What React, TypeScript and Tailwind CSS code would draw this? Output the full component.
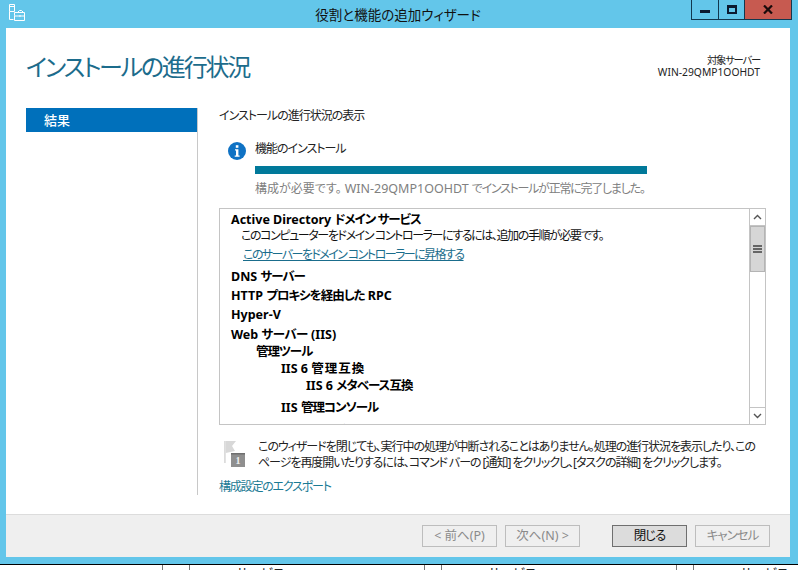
import React from "react";

const FONT = '"Noto Sans","Noto Sans CJK JP",sans-serif';

function K({ children }: { children: React.ReactNode }) {
  return <span className="tracking-[-1px]">{children}</span>;
}

function Row({ left, top, bold, children }: { left: number; top: number; bold?: boolean; children: React.ReactNode }) {
  return (
    <div
      className={`whitespace-nowrap leading-[16px] ${bold ? "font-bold text-[12.5px] text-black" : "text-[12px] text-[#111]"}`}
      style={{ paddingLeft: left, marginTop: top }}
    >
      {children}
    </div>
  );
}

function Btn({ label, primary, tight }: { label: string; primary?: boolean; tight?: boolean }) {
  return (
    <div
      className={`w-[75px] h-[22px] flex items-center justify-center text-[12.5px] border ${tight ? "tracking-[-1px]" : ""} ${
        primary ? "bg-[#dcdcdc] border-[#6f6f6f] text-[#111]" : "bg-[#efefef] border-[#bdbdbd] text-[#8a8a8a]"
      }`}
    >
      {label}
    </div>
  );
}

function ServerIcon() {
  return (
    <svg width="18" height="18" viewBox="0 0 18 18" fill="none" stroke="#fff" strokeWidth="1" className="absolute left-[8px] top-[4px]">
      <path d="M1.5 0.5h5v7h-5z" />
      <path d="M1.5 7.5v8" />
      <path d="M1.5 2.5h5" />
      <path d="M1.5 15.5h4" />
      <path d="M6.5 11.5v-3h10v3.5h-10z" fill="#63c6ea" />
      <path d="M6.5 12v4.5h10V12" />
      <path d="M9.5 8.5l2-2h2l2 2" />
      <path d="M11 12h2" />
    </svg>
  );
}

function InfoIcon() {
  return (
    <svg width="18" height="18" viewBox="0 0 18 18">
      <circle cx="9" cy="9" r="9" fill="#0f72c4" />
      <rect x="7.8" y="3.2" width="2.6" height="2.6" fill="#fff" />
      <path d="M7 7.3h3.4v6.2h1.2v1.3H6.7v-1.3h1.3V8.6H7z" fill="#fff" />
    </svg>
  );
}

function FlagIcon() {
  return (
    <svg width="22" height="26" viewBox="0 0 22 26">
      <path d="M1 0h1.8v22H1z" fill="#dcdcdc" />
      <path d="M2.8 0H13l-4 5 3 5-9.2 2z" fill="#d8d8d8" />
      <rect x="8" y="12" width="14" height="14" fill="#8f8f8f" />
      <rect x="8" y="12" width="14" height="1.5" fill="#6f6f6f" />
      <text x="15" y="23" textAnchor="middle" fontSize="10" fontWeight="700" fill="#eee" fontFamily='"Liberation Serif",serif'>1</text>
    </svg>
  );
}

function Scrollbar() {
  return (
    <div className="w-[17px] shrink-0 flex flex-col border-x border-[#c4c4c4] bg-white">
      <div className="h-[17px] flex items-center justify-center border-b border-[#c4c4c4]">
        <svg width="9" height="6" viewBox="0 0 9 6" fill="none" stroke="#555" strokeWidth="1.4"><path d="M1 5l3.5-3.5L8 5" /></svg>
      </div>
      <div className="h-[46px] bg-[#d6d6d6] border border-[#b4b4b4] flex flex-col items-center justify-center gap-[1px]">
        <div className="w-[9px] h-[2px] bg-[#666]" />
        <div className="w-[9px] h-[2px] bg-[#666]" />
        <div className="w-[9px] h-[2px] bg-[#666]" />
      </div>
      <div className="flex-1" />
      <div className="h-[17px] flex items-center justify-center border-t border-[#c4c4c4]">
        <svg width="9" height="6" viewBox="0 0 9 6" fill="none" stroke="#555" strokeWidth="1.4"><path d="M1 1l3.5 3.5L8 1" /></svg>
      </div>
    </div>
  );
}

export default function App() {
  return (
    <div className='w-[798px] h-[570px] overflow-hidden bg-white flex flex-col [font-feature-settings:"palt"]' style={{ fontFamily: FONT }}>
      <div className="h-[564px] shrink-0 bg-[#63c6ea] flex flex-col relative">
        {/* title bar */}
        <div className="h-[28px] shrink-0 flex items-center justify-center text-[13.5px] text-[#111] pt-[2px] pr-[2px]">
          役割と機能の追加ウィザード
        </div>
        <ServerIcon />
        <div className="absolute top-0 left-[691px] flex h-[20px] border-x border-b border-[#12384f]">
          <div className="w-[27px] flex items-center justify-center border-r border-[#12384f]">
            <div className="w-[10px] h-[3px] bg-[#0b1a30] mt-[3px]" />
          </div>
          <div className="w-[26px] flex items-center justify-center border-r border-[#12384f]">
            <div className="w-[10px] h-[9px] border-2 border-t-[3px] border-[#0b1a30]" />
          </div>
          <div className="w-[46px] bg-[#c75a50] flex items-center justify-center">
            <svg width="10" height="9" viewBox="0 0 10 9" stroke="#1a0a0a" strokeWidth="2.2"><path d="M1 0.5l8 8M9 0.5l-8 8" /></svg>
          </div>
        </div>

        {/* client */}
        <div className="flex-1 ml-[6px] mr-[8px] mb-[7px] bg-white flex flex-col min-h-0">
          <div className="h-[80px] shrink-0 pl-[20px] pr-[30px] flex justify-between">
            <div className="text-[24px] leading-[32px] pt-[23px] text-[#1c6c8c] tracking-[-2.2px]">インストールの進行状況</div>
            <div className="pt-[26px] text-right text-[10.3px] leading-[12px] text-[#222]">
              <div className="tracking-[-1.2px]">対象サーバー</div>
              <div>WIN-29QMP1OOHDT</div>
            </div>
          </div>

          <div className="flex-1 flex min-h-0 pl-[20px]">
            <div className="w-[172px] h-[387px] shrink-0 border-r border-[#c8c8c8]">
              <div className="w-[171px] h-[24px] bg-[#0070bb] text-white text-[13px] font-medium flex items-center pl-[18px] pt-[2px]">結果</div>
            </div>
            <div className="ml-[21px] w-[547px] flex flex-col">
              <div className="text-[12px] leading-[16px] text-[#222] tracking-[-1px]">インストールの進行状況の表示</div>
              <div className="flex mt-[17px] pl-[9px]">
                <div className="pt-[1px]"><InfoIcon /></div>
                <div className="ml-[9px]">
                  <div className="text-[12px] leading-[16px] text-[#222] tracking-[-1px]">機能のインストール</div>
                  <div className="w-[392px] h-[8px] mt-[9px] bg-[#00799a]" />
                  <div className="text-[12px] leading-[16px] mt-[7px] text-[#808080] whitespace-nowrap">
                    構成が必要です。 <span className="text-[12.5px]">WIN-29QMP1OOHDT</span> <span className="tracking-[-1.25px]">でインストールが正常に完了しました。</span>
                  </div>
                </div>
              </div>

              <div className="mt-[11px] h-[217px] flex border border-[#c4c4c4] border-r-0 overflow-hidden">
                <div className="flex-1 overflow-hidden pt-[3px]">
                  <Row left={11} top={0} bold>Active Directory <K>ドメイン サービス</K></Row>
                  <Row left={21} top={0}><span className="tracking-[-1.4px]">このコンピューターをドメイン コントローラーにするには、追加の手順が必要です。</span></Row>
                  <Row left={23} top={3}><span className="text-[#1a6d8c] underline tracking-[-1.55px]">このサーバーをドメイン コントローラーに昇格する</span></Row>
                  <Row left={11} top={6} bold>DNS <K>サーバー</K></Row>
                  <Row left={11} top={3} bold>HTTP <K>プロキシを経由した</K> RPC</Row>
                  <Row left={11} top={3} bold>Hyper-V</Row>
                  <Row left={11} top={4} bold>Web <span className="tracking-[-0.5px]">サーバー</span> (IIS)</Row>
                  <Row left={36} top={1} bold><K>管理ツール</K></Row>
                  <Row left={61} top={1} bold>IIS 6 <span className="tracking-[1px]">管理互換</span></Row>
                  <Row left={86} top={1} bold>IIS 6 <K>メタベース互換</K></Row>
                  <Row left={61} top={6} bold>IIS <K>管理コンソール</K></Row>
                  <Row left={61} top={7} bold>その他の機能</Row>
                </div>
                <Scrollbar />
              </div>

              <div className="flex mt-[14px] pl-[4px]">
                <div className="pt-[2px]"><FlagIcon /></div>
                <div className="ml-[13px] text-[12px] leading-[16px] text-[#222] whitespace-nowrap">
                  <div className="tracking-[-1.03px]">このウィザードを閉じても、実行中の処理が中断されることはありません。処理の進行状況を表示したり、この</div>
                  <div className="tracking-[-1.05px]">ページを再度開いたりするには、コマンド バーの [通知] をクリックし、[タスクの詳細] をクリックします。</div>
                </div>
              </div>
              <div className="mt-[8px] text-[12px] leading-[16px] text-[#1a7a94] tracking-[-1.2px]">構成設定のエクスポート</div>
            </div>
          </div>

          <div className="h-[43px] shrink-0 bg-[#efefef] border-t border-[#dcdcdc] flex items-start pt-[10px] pl-[416px]">
            <Btn label="< 前へ(P)" />
            <div className="w-[8px]" />
            <Btn label="次へ(N) >" />
            <div className="w-[32px]" />
            <Btn label="閉じる" primary tight />
            <div className="w-[8px]" />
            <Btn label="キャンセル" tight />
          </div>
        </div>
      </div>

      {/* window behind */}
      <div className="flex-1 border-t border-black overflow-hidden flex text-[13px] leading-[16px] text-[#222] whitespace-nowrap">
        <div className="w-[162px] shrink-0" />
        <div className="w-[28px] shrink-0 border-x border-[#777]" />
        <div className="w-[234px] shrink-0 pl-[46px]">サービス</div>
        <div className="w-[18px] shrink-0 border-x border-[#777]" />
        <div className="w-[234px] shrink-0 pl-[46px]">サービス</div>
        <div className="w-[18px] shrink-0 border-x border-[#777]" />
        <div className="pl-[46px]">サービス</div>
      </div>
    </div>
  );
}
